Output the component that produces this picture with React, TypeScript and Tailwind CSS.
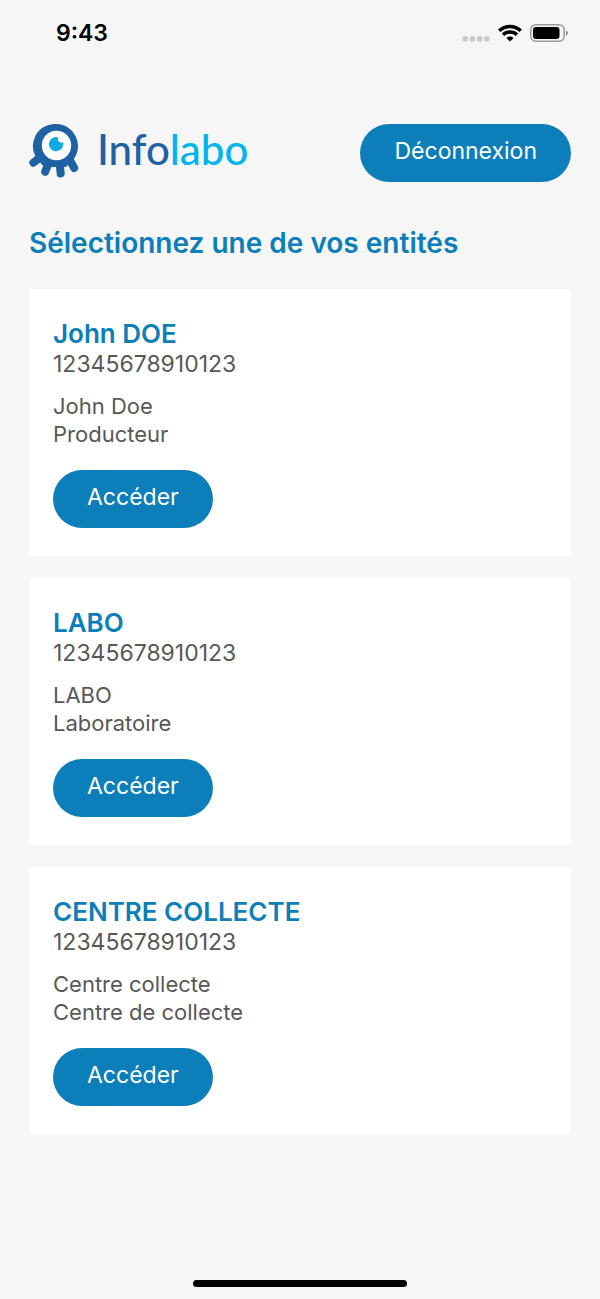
type Entity = {
  title: string;
  siret: string;
  name: string;
  role: string;
};

const entities: Entity[] = [
  {
    title: "John DOE",
    siret: "12345678910123",
    name: "John Doe",
    role: "Producteur",
  },
  {
    title: "LABO",
    siret: "12345678910123",
    name: "LABO",
    role: "Laboratoire",
  },
  {
    title: "CENTRE COLLECTE",
    siret: "12345678910123",
    name: "Centre collecte",
    role: "Centre de collecte",
  },
];

function StatusBar() {
  return (
    <div className="flex h-[66px] items-center justify-between pr-8 pl-14">
      <span className="text-[23px] leading-8 font-semibold text-black">9:43</span>
      <div className="flex items-center gap-2">
        <svg width="28" height="18" viewBox="0 0 28 18" fill="#c9c9c9" aria-hidden="true">
          <rect x="0.5" y="12.2" width="5.2" height="5.4" rx="1.5" />
          <rect x="7.8" y="12.2" width="5.2" height="5.4" rx="1.5" />
          <rect x="15" y="12.2" width="5.2" height="5.4" rx="1.5" />
          <rect x="22.2" y="12.2" width="5.2" height="5.4" rx="1.5" />
        </svg>
        <svg width="24" height="18" viewBox="0 0 24 18" aria-hidden="true">
          <g fill="none" stroke="#000" strokeWidth="3.5">
            <path d="M1.2 6.7a15.7 15.7 0 0 1 21.6 0" />
            <path d="M5 10.7a10.2 10.2 0 0 1 14 0" />
          </g>
          <path d="M12 17.5l-3.6-3.5a5.2 5.2 0 0 1 7.2 0z" />
        </svg>
        <svg width="38" height="18" viewBox="0 0 38 18" aria-hidden="true">
          <rect x="0.8" y="0.8" width="33.4" height="16.4" rx="5" fill="none" stroke="#9a9a9a" strokeWidth="1.5" />
          <rect x="3" y="3" width="26.5" height="12" rx="3" />
          <path d="M36 6.2c2.4 1 2.4 4.6 0 5.6z" fill="#8a8a8a" />
        </svg>
      </div>
    </div>
  );
}

function Logo() {
  return (
    <div className="flex items-start gap-[18px]">
      <svg width="50" height="54" viewBox="0 0 50 54" aria-hidden="true">
        <g stroke="#1f62a3" strokeWidth="8" strokeLinecap="round" fill="none">
          <path d="M13 32L4.4 38.7" />
          <path d="M20 38L16.2 47.8" />
          <path d="M30.5 38L31.7 49.5" />
          <path d="M39 33L45.2 44" />
        </g>
        <path
          d="M27 0a22 22 0 0 1 17.6 35.2L37 43H15L9.4 36.5A22 22 0 0 1 27 0z"
          fill="#1f62a3"
        />
        <circle cx="27.5" cy="21.5" r="14.7" fill="#fff" />
        <path
          d="M29.5 13.4a7.2 7.2 0 1 0 4.5 4.8a3.4 3.4 0 0 1-4.5-4.8z"
          fill="#12a8e0"
        />
      </svg>
      <span className="font-['Lato'] text-[42px] leading-[50px] font-medium text-[#1f62a3]">
        Info<span className="text-[#00b5ee]">labo</span>
      </span>
    </div>
  );
}

function PillButton({ label }: { label: string }) {
  return (
    <button
      type="button"
      className="h-[58px] rounded-full bg-[#0c7eb9] px-[34px] pb-1 text-[23px] leading-7 text-white hover:bg-[#0a6fa4]"
    >
      {label}
    </button>
  );
}

function EntityCard({ entity }: { entity: Entity }) {
  return (
    <li className="bg-white px-6 pt-[30px] pb-7 text-[22px] leading-7 text-[#585858]">
      <h2 className="text-[26px] leading-[30px] font-semibold text-[#0c7eb9]">{entity.title}</h2>
      <p className="text-[23px] leading-[30px]">{entity.siret}</p>
      <div className="mt-[13px] mb-[22px]">
        <p>{entity.name}</p>
        <p>{entity.role}</p>
      </div>
      <PillButton label="Accéder" />
    </li>
  );
}

export default function App() {
  return (
    <div className="flex min-h-screen flex-col bg-[#f6f6f6] font-['Inter',sans-serif]">
      <StatusBar />
      <header className="mt-[58px] flex items-start justify-between px-[29px]">
        <Logo />
        <PillButton label="Déconnexion" />
      </header>
      <main className="flex-1 px-[29px] pt-[43px]">
        <h1 className="text-[28px] leading-9 font-semibold text-[#0c7eb9]">
          Sélectionnez une de vos entités
        </h1>
        <ul className="mt-7 flex flex-col gap-[22px]">
          {entities.map((entity) => (
            <EntityCard key={entity.title} entity={entity} />
          ))}
        </ul>
      </main>
      <div className="mx-auto mt-6 mb-3 h-[7px] w-[214px] rounded-full bg-black" />
    </div>
  );
}
